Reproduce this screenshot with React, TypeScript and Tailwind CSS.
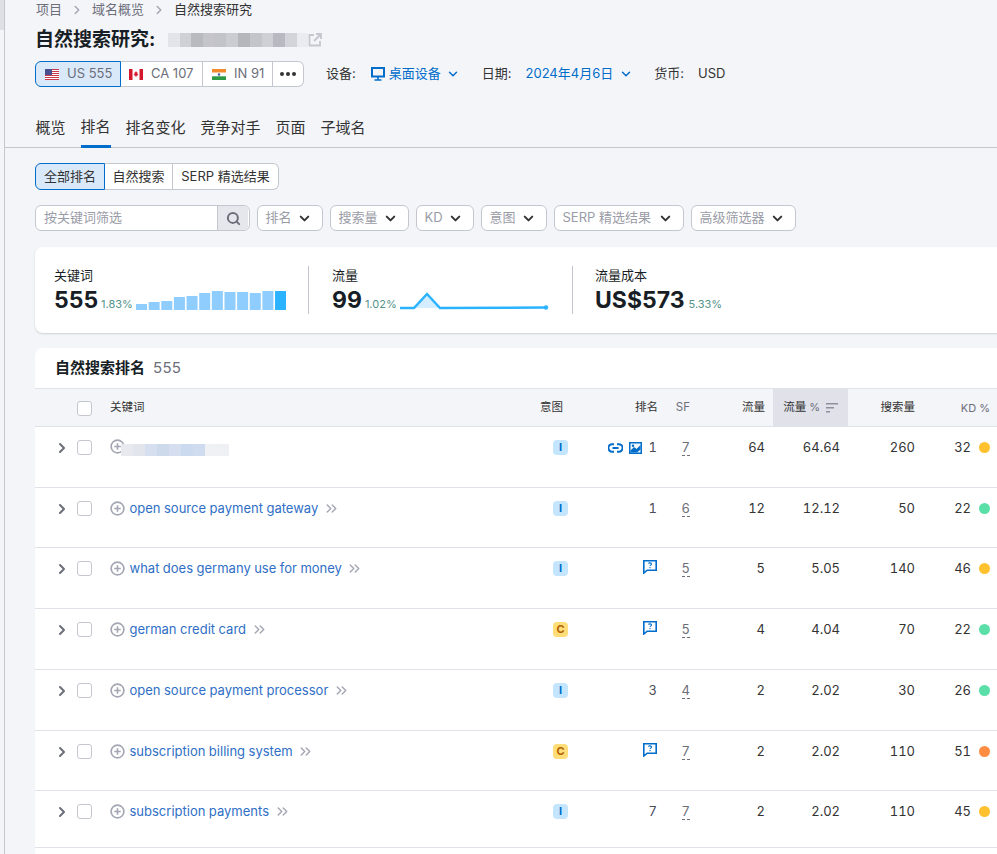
import { ChevronDown, ChevronRight, ChevronsRight, Search } from 'lucide-react';

const BLUE = '#006dca';

const COUNTRIES = [
  { code: 'US 555', box: 'w-[86px] rounded-l-[6px] border border-[#006dca] bg-[#d9e9f9] pl-[9px]', flag: 'us' },
  { code: 'CA 107', box: 'w-[82px] border-y border-r border-[#c4c7cf] bg-white pl-[8px]', flag: 'ca' },
  { code: 'IN 91', box: 'w-[70px] border-y border-r border-[#c4c7cf] bg-white pl-[9px]', flag: 'in' },
];

const TABS = ['概览', '排名', '排名变化', '竞争对手', '页面', '子域名'];

const FILTERS = [
  { label: '排名', width: 'w-[66px]' },
  { label: '搜索量', width: 'w-[79px]' },
  { label: 'KD', width: 'w-[58px]' },
  { label: '意图', width: 'w-[66px]' },
  { label: 'SERP 精选结果', width: 'w-[130px]' },
  { label: '高级筛选器', width: 'w-[105px]' },
];

const BARS = [6, 8, 9, 13, 14, 17, 19, 18, 18, 17, 19, 19];

const TITLE_BLUR = ['#e3e4e9', '#cfd0d6', '#b9b9c0', '#c4c4ca', '#c2c2c9', '#cbccd2', '#b5b5bc', '#c4c5cb', '#cfd0d6', '#b9bac1', '#d3d4da', '#eaebf0'];
const ROW_BLUR = ['#e8e9ee', '#e2e5ec', '#d5dff0', '#cddaec', '#d5dff0', '#cbdaef', '#cfdcef', '#f0f1f4', '#eff0f3'];

const ROWS = [
  { kw: '', intent: 'I', icons: 'link', rank: '1', sf: '7', traffic: '64', pct: '64.64', vol: '260', kd: '32', dot: 'bg-[#ffc12e]', h: 'h-[61px]' },
  { kw: 'open source payment gateway', intent: 'I', icons: '', rank: '1', sf: '6', traffic: '12', pct: '12.12', vol: '50', kd: '22', dot: 'bg-[#5bdfa8]', h: 'h-[60px]' },
  { kw: 'what does germany use for money', intent: 'I', icons: 'q', rank: '', sf: '5', traffic: '5', pct: '5.05', vol: '140', kd: '46', dot: 'bg-[#ffc12e]', h: 'h-[61px]' },
  { kw: 'german credit card', intent: 'C', icons: 'q', rank: '', sf: '5', traffic: '4', pct: '4.04', vol: '70', kd: '22', dot: 'bg-[#5bdfa8]', h: 'h-[61px]' },
  { kw: 'open source payment processor', intent: 'I', icons: '', rank: '3', sf: '4', traffic: '2', pct: '2.02', vol: '30', kd: '26', dot: 'bg-[#5bdfa8]', h: 'h-[61px]' },
  { kw: 'subscription billing system', intent: 'C', icons: 'q', rank: '', sf: '7', traffic: '2', pct: '2.02', vol: '110', kd: '51', dot: 'bg-[#ff8c43]', h: 'h-[60px]' },
  { kw: 'subscription payments', intent: 'I', icons: '', rank: '7', sf: '7', traffic: '2', pct: '2.02', vol: '110', kd: '45', dot: 'bg-[#ffc12e]', h: 'h-[57px]' },
];

function Flag({ kind }: { kind: string }) {
  if (kind === 'us') {
    return (
      <svg width="14" height="11" viewBox="0 0 14 11" className="shrink-0">
        <rect width="14" height="11" fill="#fff" />
        {[0, 2, 4, 6, 8, 10].map((y) => (
          <rect key={y} y={y} width="14" height="1" fill="#c8394d" />
        ))}
        <rect width="7" height="6" fill="#4a4f8f" />
      </svg>
    );
  }
  if (kind === 'ca') {
    return (
      <svg width="14" height="11" viewBox="0 0 14 11" className="shrink-0">
        <rect width="14" height="11" fill="#fff" />
        <rect width="3.5" height="11" fill="#d5172c" />
        <rect x="10.5" width="3.5" height="11" fill="#d5172c" />
        <path d="M7 2l.8 1.5.8-.3-.3 2 1-.3-.4 1.4-1.4.4.1 1.1H6.400l.1-1.100-1.400-.4-.4-1.400 1 .3-.3-2 .8.3z" fill="#d5172c" />
      </svg>
    );
  }
  return (
    <svg width="14" height="11" viewBox="0 0 14 11" className="shrink-0">
      <rect width="14" height="3.700" fill="#f08a2c" />
      <rect y="3.700" width="14" height="3.600" fill="#fff" />
      <rect y="7.300" width="14" height="3.700" fill="#2d9a46" />
      <circle cx="7" cy="5.500" r="1.200" fill="#3f5a9a" />
    </svg>
  );
}

function LinkIcon() {
  return (
    <svg width="15" height="10" viewBox="0 0 15 10" fill="none">
      <path d="M6 1.200H4.200a3.800 3.800 0 0 0 0 7.600H6M9 1.200h1.800a3.800 3.800 0 0 1 0 7.600H9" stroke={BLUE} strokeWidth="2" />
      <path d="M4.500 5h6" stroke={BLUE} strokeWidth="2" />
    </svg>
  );
}

function ImageIcon() {
  return (
    <svg width="13" height="12" viewBox="0 0 13 12">
      <rect width="13" height="12" fill={BLUE} />
      <rect x="1.500" y="1.500" width="10" height="9" fill="#fff" opacity="0.95" />
      <path d="M1.500 8.500L5 5l2.500 2L11.500 3v4.500L8 10.500H1.500z" fill={BLUE} />
      <circle cx="4" cy="3.800" r="1.200" fill={BLUE} />
    </svg>
  );
}

function QuestionIcon() {
  return (
    <svg width="14" height="14" viewBox="0 0 14 14" fill="none">
      <path d="M.800.800h12.400v9.400H4.200L.800 13z" stroke={BLUE} strokeWidth="1.600" />
      <path d="M5.500 3.600c.3-1 3-1 3 .5 0 1-1.500 1-1.500 2M7 7v1.200" stroke={BLUE} strokeWidth="1.100" />
    </svg>
  );
}

function PlusCircle() {
  return (
    <svg width="15" height="15" viewBox="0 0 16 16" fill="none" className="shrink-0">
      <circle cx="8" cy="8" r="6.800" stroke="#a4a6b3" strokeWidth="1.800" />
      <path d="M8 4.500v7M4.500 8h7" stroke="#a4a6b3" strokeWidth="1.700" />
    </svg>
  );
}

function Checkbox() {
  return <div className="h-[15px] w-[15px] rounded-[3px] border border-[#c4c7cf] bg-white" />;
}

export default function App() {
  return (
    <div className="flex h-[854px] w-[997px] overflow-hidden bg-[#f4f5f9] font-['Inter','Noto_Sans_CJK_SC',sans-serif] text-[#333]">
      {/* leftover sidebar edge */}
      <div className="w-[5px] shrink-0 border-r border-[#c4c7cf]">
        <div className="h-[30px] bg-[#dfe0e5]" />
      </div>

      <div className="flex w-[1020px] shrink-0 flex-col">
        {/* breadcrumb */}
        <div className="flex h-[20px] items-center pl-[31px] text-[13px] text-[#6c6e79]">
          <span>项目</span>
          <ChevronRight size={14} strokeWidth={2.500} className="mx-[8px] text-[#a4a6b3]" />
          <span>域名概览</span>
          <ChevronRight size={14} strokeWidth={2.500} className="mx-[8px] text-[#a4a6b3]" />
          <span className="text-[#333]">自然搜索研究</span>
        </div>

        {/* title */}
        <div className="mt-[7px] flex h-[26px] items-center pl-[30px]">
          <span className="w-[133px] text-[19px] font-bold text-[#181e25]">自然搜索研究:</span>
          <div className="flex h-[14px]">
            {TITLE_BLUR.map((c, i) => (
              <div key={i} className="h-full w-[11.700px]" style={{ backgroundColor: c }} />
            ))}
          </div>
          <svg width="14" height="14" viewBox="0 0 14 14" fill="none" stroke="#c4c7cf" strokeWidth="1.800">
            <path d="M6 2H1.500v10.500H12V8M8 1h5v5M13 1L6 8" />
          </svg>
        </div>

        {/* country row */}
        <div className="mt-[8px] flex h-[26px] items-center pl-[30px] text-[13px]">
          <div className="flex h-full">
            {COUNTRIES.map((c) => (
              <div key={c.code} className={`flex items-center gap-[8px] text-[#6c6e79] ${c.box}`}>
                <Flag kind={c.flag} />
                <span>{c.code}</span>
              </div>
            ))}
            <div className="flex w-[31px] items-center justify-center gap-[2px] rounded-r-[6px] border-y border-r border-[#c4c7cf] bg-white">
              <span className="h-[4px] w-[4px] rounded-full bg-[#333]" />
              <span className="h-[4px] w-[4px] rounded-full bg-[#333]" />
              <span className="h-[4px] w-[4px] rounded-full bg-[#333]" />
            </div>
          </div>
          <span className="ml-[22px]">设备:</span>
          <svg width="14" height="14" viewBox="0 0 14 14" fill="none" className="ml-[15px]">
            <rect x="1" y="1" width="12" height="8.500" stroke={BLUE} strokeWidth="2" />
            <path d="M7 10v2.500M3.500 13h7" stroke={BLUE} strokeWidth="1.600" />
          </svg>
          <span className="ml-[4px] text-[#006dca]">桌面设备</span>
          <ChevronDown size={14} strokeWidth={2.500} className="ml-[5px] text-[#006dca]" />
          <span className="ml-[22px]">日期:</span>
          <span className="ml-[14px] text-[#006dca]">2024年4月6日</span>
          <ChevronDown size={14} strokeWidth={2.500} className="ml-[6px] text-[#006dca]" />
          <span className="ml-[21px]">货币:</span>
          <span className="ml-[14px]">USD</span>
        </div>

        {/* tabs */}
        <div className="mt-[25px] flex h-[36px] gap-[15px] border-b border-[#c4c7cf] pl-[30.500px] text-[15px]">
          {TABS.map((t, i) => (
            <div
              key={t}
              className={`flex h-[36px] items-center pb-[3px] ${i === 1 ? 'border-b-[3px] border-[#006dca] pb-0' : ''}`}
            >
              {t}
            </div>
          ))}
        </div>

        {/* segmented */}
        <div className="mt-[15px] flex h-[27px] pl-[30px] text-[13px]">
          <div className="flex w-[70px] items-center justify-center rounded-l-[6px] border border-[#006dca] bg-[#d9e9f9]">全部排名</div>
          <div className="flex w-[68px] items-center justify-center border-y border-r border-[#c4c7cf] bg-white">自然搜索</div>
          <div className="flex w-[106px] items-center justify-center rounded-r-[6px] border-y border-r border-[#c4c7cf] bg-white">SERP 精选结果</div>
        </div>

        {/* filters */}
        <div className="mt-[15px] flex h-[26px] gap-[7px] pl-[30px] text-[13px] text-[#9a9ca7]">
          <div className="flex w-[215px] overflow-hidden rounded-[6px] border border-[#c4c7cf] bg-white">
            <span className="flex flex-1 items-center pl-[8px]">按关键词筛选</span>
            <div className="mr-[1px] flex w-[31px] items-center justify-center border-l border-[#c4c7cf] bg-[#e6e7ed]">
              <Search size={15} strokeWidth={3.200} className="text-[#6c6e79]" />
            </div>
          </div>
          {FILTERS.map((f) => (
            <div key={f.label} className={`flex items-center justify-between rounded-[6px] border border-[#c4c7cf] bg-white pl-[7.500px] pr-[10px] ${f.width}`}>
              <span>{f.label}</span>
              <ChevronDown size={15} strokeWidth={3.200} className="text-[#333]" />
            </div>
          ))}
        </div>

        {/* stats card */}
        <div className="ml-[30px] mt-[16px] flex h-[86px] items-center rounded-l-[8px] bg-white pl-[19px] shadow-[0_1px_2px_rgba(0,0,0,0.15)]">
          <div className="flex h-[48px] w-[255px] flex-col border-r border-[#c4c7cf]">
            <span className="text-[13px] leading-[18px] text-[#181e25]">关键词</span>
            <div className="mt-[2px] flex items-end">
              <span className="text-[23px] font-bold leading-[28px] text-[#181e25]">555</span>
              <span className="mb-[3px] ml-[3px] text-[11px] leading-[14px] text-[#55938a]">1.83%</span>
              <svg width="150" height="19" viewBox="0 0 150 19" className="mb-[4px] ml-[3px]">
                {BARS.map((h, i) => (
                  <rect key={i} x={i * 12.640} y={19 - h} width="11" height={h} fill={i === 11 ? '#2bb3ff' : '#8fcdff'} />
                ))}
              </svg>
            </div>
          </div>
          <div className="flex h-[48px] w-[264px] flex-col border-r border-[#c4c7cf] pl-[23px]">
            <span className="text-[13px] leading-[18px] text-[#181e25]">流量</span>
            <div className="mt-[2px] flex items-end">
              <span className="text-[23px] font-bold leading-[28px] text-[#181e25]">99</span>
              <span className="mb-[3px] ml-[3px] text-[11px] leading-[14px] text-[#55938a]">1.02%</span>
              <svg width="150" height="19" viewBox="0 0 150 19" fill="none" className="mb-[4px] ml-[3px]">
                <path d="M14 17L27 3l13 14z" fill="#d4edff" />
                <path d="M0 17h14L27 3l13 14 106 -.5" stroke="#2bb3ff" strokeWidth="2.500" />
                <circle cx="146" cy="16.500" r="2.200" fill="#2bb3ff" />
              </svg>
            </div>
          </div>
          <div className="flex h-[48px] flex-col pl-[22px]">
            <span className="text-[13px] leading-[18px] text-[#181e25]">流量成本</span>
            <div className="mt-[2px] flex items-end">
              <span className="text-[23px] font-bold leading-[28px] text-[#181e25]">US$573</span>
              <span className="mb-[3px] ml-[4px] text-[11px] leading-[14px] text-[#55938a]">5.33%</span>
            </div>
          </div>
        </div>

        {/* table card */}
        <div className="ml-[30px] mt-[15px] flex-1 rounded-tl-[8px] bg-white">
          <div className="flex h-[40px] items-center pl-[20px]">
            <span className="text-[15px] font-bold text-[#181e25]">自然搜索排名</span>
            <span className="ml-[8px] text-[15px] tracking-[0.3px] text-[#6c6e79]">555</span>
          </div>

          <div className="flex h-[39px] items-center border-y border-[#e0e1e9] bg-[#f4f5f9] pt-[1px] text-[11.500px]">
            <div className="w-[42px]" />
            <div className="w-[33px]"><Checkbox /></div>
            <div className="w-[430px]">关键词</div>
            <div className="w-[45px]">意图</div>
            <div className="w-[73px] text-right">排名</div>
            <div className="w-[32px] text-right text-[#6c6e79]">SF</div>
            <div className="w-[83px] pr-[8px] text-right">流量</div>
            <div className="-mt-[1px] flex h-[38px] w-[75px] items-center justify-end gap-[6px] bg-[#e0e1e9] pr-[10px]">
              <span>流量<span className="ml-[3px] text-[11px] text-[#6c6e79]">%</span></span>
              <svg width="12" height="10" viewBox="0 0 12 10">
                <rect width="12" height="1.500" fill="#8d8f99" />
                <rect y="4" width="8" height="1.500" fill="#8d8f99" />
                <rect y="8" width="4" height="1.500" fill="#8d8f99" />
              </svg>
            </div>
            <div className="w-[75px] pr-[8px] text-right">搜索量</div>
            <div className="w-[67px] text-right text-[11px] text-[#6c6e79]">KD %</div>
          </div>

          {ROWS.map((r, idx) => (
            <div key={idx} className={`flex items-start border-b border-[#e0e1e9] pt-[13px] text-[13px] leading-[15px] tabular-nums ${r.h}`}>
              <div className="flex w-[42px] justify-end pr-[7px]">
                <ChevronRight size={16} strokeWidth={3} className="text-[#6c6e79]" />
              </div>
              <div className="w-[33px]"><Checkbox /></div>
              <div className="-mt-[1px] flex w-[430px] items-center gap-[4.500px]">
                <PlusCircle />
                {r.kw ? (
                  <>
                    <span className="text-[#2f6fc5]">{r.kw}</span>
                    <ChevronsRight size={17} strokeWidth={2} className="text-[#a4a6b3]" />
                  </>
                ) : (
                  <div className="-ml-[9px] flex h-[12px] translate-y-[3px]">
                    {ROW_BLUR.map((c, i) => (
                      <div key={i} className="h-full w-[12px]" style={{ backgroundColor: c }} />
                    ))}
                  </div>
                )}
              </div>
              <div className="w-[45px] pl-[13px]">
                <div
                  className={`flex h-[15px] w-[15px] items-center justify-center rounded-[4px] text-[11px] font-bold ${
                    r.intent === 'I' ? 'bg-[#c4e5fe] text-[#006dca]' : 'bg-[#ffdd78] text-[#b36200]'
                  }`}
                >
                  {r.intent}
                </div>
              </div>
              <div className="flex h-[15px] w-[72px] items-start justify-end gap-[6px] text-[#4a4c57]">
                {r.icons === 'link' && (
                  <div className="flex items-center gap-[6px] pt-[2px]">
                    <LinkIcon />
                    <ImageIcon />
                  </div>
                )}
                {r.icons === 'q' && (
                  <div className="-mt-[1px]">
                    <QuestionIcon />
                  </div>
                )}
                {r.rank && <span className="ml-[1px]">{r.rank}</span>}
              </div>
              <div className="flex w-[33px] justify-end">
                <span className="border-b border-dashed border-[#6c6e79] text-[#6c6e79]">{r.sf}</span>
              </div>
              <div className="w-[83px] pr-[8px] text-right">{r.traffic}</div>
              <div className="w-[75px] pr-[8px] text-right">{r.pct}</div>
              <div className="w-[75px] pr-[8px] text-right">{r.vol}</div>
              <div className="flex w-[67px] items-center justify-end gap-[8px]">
                <span>{r.kd}</span>
                <span className={`h-[11px] w-[11px] rounded-full ${r.dot}`} />
              </div>
            </div>
          ))}
        </div>
      </div>
    </div>
  );
}
